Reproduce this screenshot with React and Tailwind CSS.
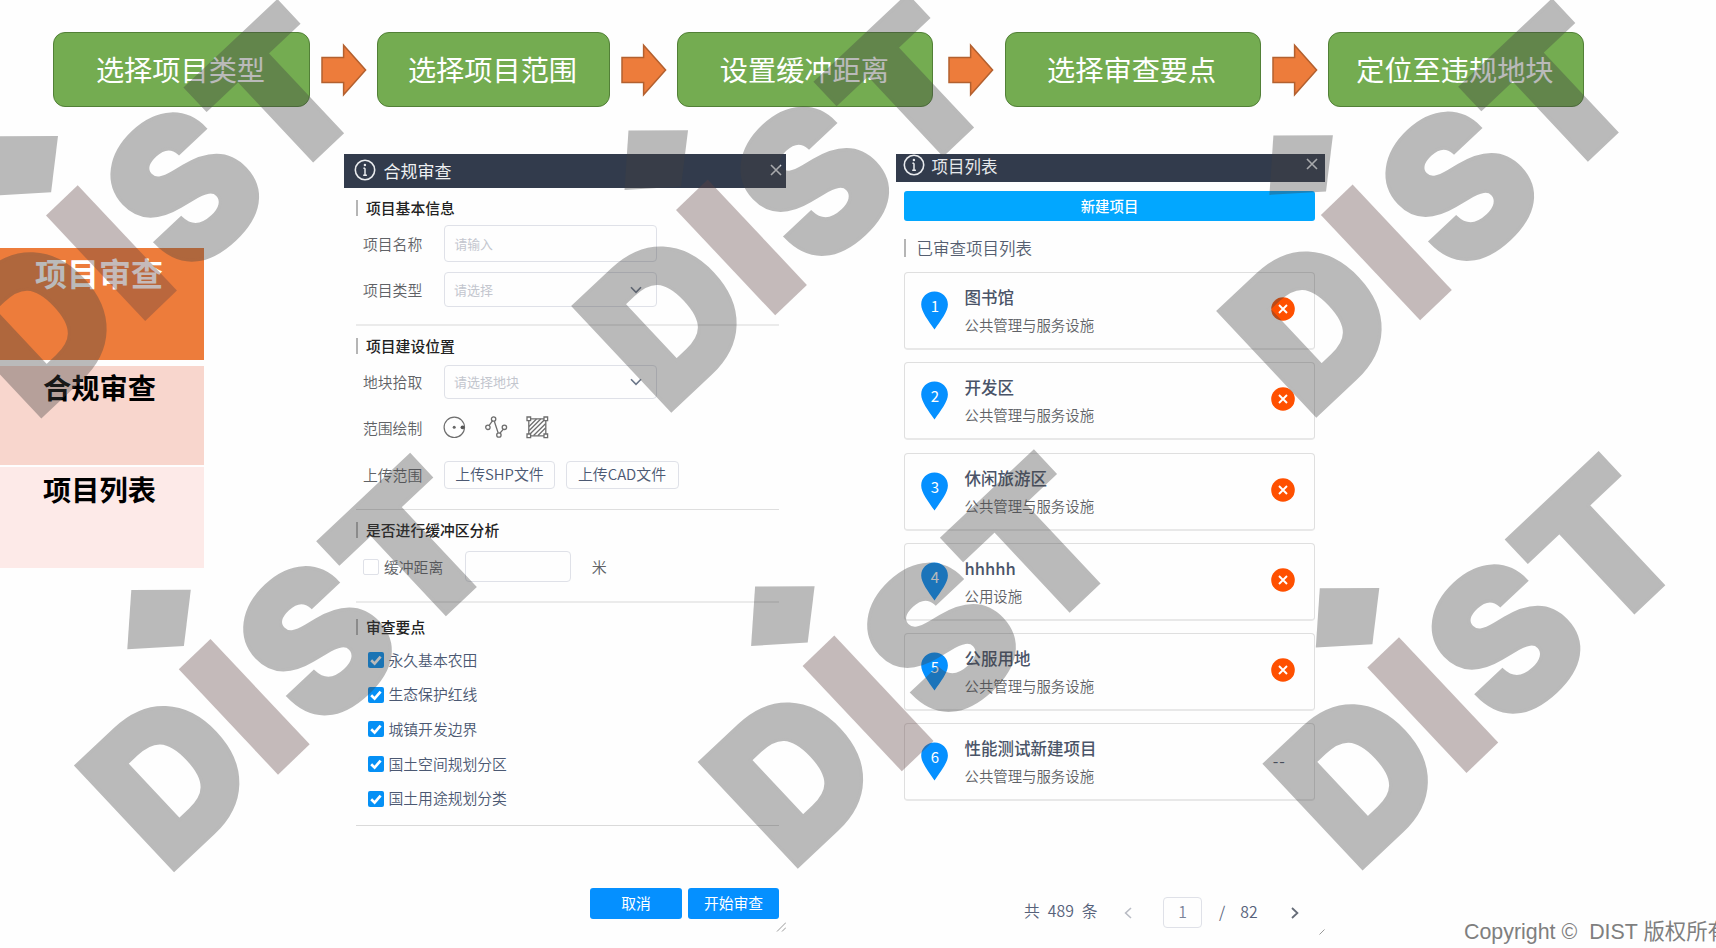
import React from "react";

const STEPS = [
  { label: "选择项目类型", width: "w-[257px]", arrow: "ml-[10.5px] mr-[10.5px]" },
  { label: "选择项目范围", width: "w-[233px]", arrow: "ml-[10.7px] mr-[10.7px]" },
  { label: "设置缓冲距离", width: "w-[256px]", arrow: "ml-[15px] mr-[10.3px]" },
  { label: "选择审查要点", width: "w-[256px]", arrow: "ml-[11px] mr-[10.2px]" },
  { label: "定位至违规地块", width: "w-[256px]" },
];

const POINTS = ["永久基本农田", "生态保护红线", "城镇开发边界", "国土空间规划分区", "国土用途规划分类"];

const PROJECTS = [
  { name: "图书馆", type: "公共管理与服务设施", failed: true },
  { name: "开发区", type: "公共管理与服务设施", failed: true },
  { name: "休闲旅游区", type: "公共管理与服务设施", failed: true },
  { name: "hhhhh", type: "公用设施", failed: true },
  { name: "公服用地", type: "公共管理与服务设施", failed: true },
  { name: "性能测试新建项目", type: "公共管理与服务设施", failed: false },
];

const MARKS = [
  [40.9, 419],
  [670.9, 413.3],
  [1315.8, 418.3],
  [173.7, 872.7],
  [797.5, 869.3],
  [1362.2, 871],
];

function Arrow({ className }) {
  return (
    <svg className={`h-[54px] w-[46px] shrink-0 ${className}`} viewBox="0 0 46 54">
      <path
        d="M1 14.5H22.6V2.2L44.6 27L22.6 51.8V39.5H1Z"
        fill="#ed7c3b"
        stroke="#b3602f"
        strokeWidth="1.5"
      />
    </svg>
  );
}

function InfoIcon() {
  return (
    <svg className="size-[22px] shrink-0" viewBox="0 0 22 22" fill="none" stroke="#e9ebee">
      <circle cx="11" cy="11" r="9.7" strokeWidth="1.6" />
      <path d="M11 9.3V16.2M9.4 9.3H11M9.2 16.2H12.9" strokeWidth="1.5" />
      <circle cx="10.9" cy="6" r="1.2" fill="#e9ebee" stroke="none" />
    </svg>
  );
}

function CloseIcon() {
  return (
    <svg className="size-[12px]" viewBox="0 0 12 12" fill="none" stroke="#e2e4e8" strokeWidth="1.6">
      <path d="M1 1L11 11M11 1L1 11" />
    </svg>
  );
}

function ChevronDown() {
  return (
    <svg className="h-[8px] w-[12px]" viewBox="0 0 12 8" fill="none" stroke="#6b7689" strokeWidth="1.6">
      <path d="M1 1.2L6 6.4L11 1.2" />
    </svg>
  );
}

function Section({ title, className }) {
  return (
    <div className={`flex h-4 items-center ${className}`}>
      <div className="h-4 w-[2px] bg-[#b5b5b5]" />
      <div className="ml-2 text-[14.8px] leading-4 font-medium text-[#222]">{title}</div>
    </div>
  );
}

function Field({ label, height, children }) {
  return (
    <div className={`flex items-center pl-[7px] ${height}`}>
      <div className="w-[81px] text-[14.8px] leading-4 font-[350] text-[#606266]">{label}</div>
      {children}
    </div>
  );
}

function Select({ text }) {
  return (
    <div className="flex h-full w-[213px] items-center justify-between rounded-[4px] border border-[#dfe1e8] pr-[14px] pl-[9px]">
      <span className="text-[13px] leading-4 text-[#c3c6ce]">{text}</span>
      <ChevronDown />
    </div>
  );
}

function CheckBox() {
  return (
    <svg className="size-4" viewBox="0 0 16 16">
      <rect width="16" height="16" rx="2" fill="#0590f5" />
      <path d="M3.2 8.3L6.6 11.6L12.6 4.6" fill="none" stroke="#fff" strokeWidth="2.7" />
    </svg>
  );
}

function ReviewPanel() {
  return (
    <section className="mt-[47px] w-[442px] shrink-0">
      <header className="flex h-[34px] items-center bg-[#323b4c] pr-[4.5px] pl-[10px]">
        <div className="-mt-[2px]">
          <InfoIcon />
        </div>
        <div className="ml-[7.5px] text-[17px] leading-5 text-[#eef0f2]">合规审查</div>
        <div className="-mt-[3px] ml-auto">
          <CloseIcon />
        </div>
      </header>
      <div className="pr-[7px] pl-[12px]">
        <Section title="项目基本信息" className="mt-[12px]" />
        <div className="mt-[9px] flex flex-col gap-[10px]">
          <Field label="项目名称" height="h-[37px]">
            <div className="flex h-full w-[213px] items-center rounded-[4px] border border-[#dfe1e8] pl-[9.5px]">
              <span className="text-[12.8px] leading-4 text-[#c3c6ce]">请输入</span>
            </div>
          </Field>
          <Field label="项目类型" height="h-[35px]">
            <Select text="请选择" />
          </Field>
        </div>
        <div className="mt-[17px] h-[2px] bg-[#ebebeb]" />
        <Section title="项目建设位置" className="mt-[12px]" />
        <div className="mt-[11px]">
          <Field label="地块拾取" height="h-[34px]">
            <Select text="请选择地块" />
          </Field>
        </div>
        <div className="mt-[17px]">
          <Field label="范围绘制" height="h-[23px]">
            <div className="-ml-[0.7px] flex gap-[18.5px]">
              <svg className="size-[23px]" viewBox="0 0 23 23" fill="none" stroke="#6e6e6e">
                <circle cx="11.3" cy="11.3" r="10.2" strokeWidth="1.2" />
                <circle cx="11.2" cy="11.3" r="1.5" fill="#666" stroke="none" />
                <circle cx="19.5" cy="11.3" r="1.9" fill="#555" stroke="none" />
              </svg>
              <svg className="size-[23px]" viewBox="0 0 23 23" fill="none" stroke="#6e6e6e" strokeWidth="1.3">
                <path d="M4 9.6L7.6 4.7M9.3 5.2L13.1 16.7M15.1 17L18.2 13.4" />
                <circle cx="2.9" cy="11.3" r="2.2" />
                <circle cx="8.6" cy="3" r="2.2" />
                <circle cx="13.9" cy="19" r="2.2" />
                <circle cx="19.4" cy="11.3" r="2.2" />
              </svg>
              <svg className="size-[23px]" viewBox="0 0 23 23" fill="none" stroke="#6e6e6e" strokeWidth="1.3">
                <path d="M2.8 4.5V18M19.8 4.5V18M4.5 2.8H18M4.5 19.8H18" />
                <path d="M3 10.5L10.5 3M3 14.7L14.7 3M4 18L18.5 3.8M7.6 19.5L19.5 7.8M12 19.5L19.5 12" />
                <path d="M1 1h3.6v3.6H1zM18 1h3.6v3.6H18zM1 18h3.6v3.6H1zM18 18h3.6v3.6H18z" fill="#fff" />
              </svg>
            </div>
          </Field>
        </div>
        <div className="mt-[21.5px]">
          <Field label="上传范围" height="h-[28px]">
            <div className="flex h-full w-[111px] items-center justify-center rounded-[4px] border border-[#dfe1e8] pb-[1px] text-[14.9px] leading-4 font-[350] whitespace-nowrap text-[#4b5872]">
              上传SHP文件
            </div>
            <div className="ml-[11px] flex h-full w-[113px] items-center justify-center rounded-[4px] border border-[#dfe1e8] pr-[1px] pb-[1px] text-[14.9px] leading-4 font-[350] whitespace-nowrap text-[#4b5872]">
              上传CAD文件
            </div>
          </Field>
        </div>
        <div className="mt-[20.5px] h-px bg-[#dedede]" />
        <Section title="是否进行缓冲区分析" className="mt-[12px]" />
        <div className="mt-[13px] flex h-[31px] items-center pl-[7px]">
          <div className="size-4 rounded-[2px] border border-[#dfe1e8] bg-white" />
          <div className="ml-[5px] text-[14.8px] leading-4 font-[350] text-[#606266]">缓冲距离</div>
          <div className="ml-[22px] h-full w-[106px] rounded-[4px] border border-[#dfe1e8]" />
          <div className="ml-[20.5px] text-[15px] leading-4 font-[350] text-[#606266]">米</div>
        </div>
        <div className="mt-[19px] h-[2px] bg-[#ebebeb]" />
        <Section title="审查要点" className="mt-[16px]" />
        <div className="mt-[8px] pl-[11.5px]">
          {POINTS.map((p) => (
            <div key={p} className="flex h-[34.6px] items-center">
              <CheckBox />
              <span className="-mt-[1px] ml-[5px] text-[14.8px] leading-4 font-[350] text-[#4b5872]">{p}</span>
            </div>
          ))}
        </div>
        <div className="mt-[9px] h-px bg-[#dadada]" />
        <div className="mt-[62px] flex justify-end gap-[6px]">
          <button className="h-[31px] w-[92px] rounded-[3px] bg-[#0590ff] text-[14.8px] leading-4 text-white">取消</button>
          <button className="h-[31px] w-[91px] rounded-[3px] bg-[#0590ff] text-[14.8px] leading-4 text-white">开始审查</button>
        </div>
      </div>
      <svg className="mt-[3px] ml-auto size-[10px]" viewBox="0 0 10 10" fill="none" stroke="#999" strokeWidth="1">
        <path d="M1 9.5L10 .5M6 9.5L10 5.5" />
      </svg>
    </section>
  );
}

function Pin({ n }) {
  return (
    <svg className="h-[39px] w-[28px]" viewBox="0 0 28 39">
      <path d="M13.5 .5C5.9 .5 .2 6.2 .2 13.4C.2 20.5 7 29 13.5 38.5C20 29 26.9 20.5 26.9 13.4C26.9 6.2 21.1 .5 13.5 .5Z" fill="#0590ff" />
      <text x="14" y="20.7" textAnchor="middle" fontSize="15" fill="#fff">
        {n}
      </text>
    </svg>
  );
}

function ListPanel() {
  return (
    <section className="mt-[47px] ml-[110px] w-[429px] shrink-0">
      <header className="flex h-[28px] items-center bg-[#323b4c] pr-[7px] pl-[6.5px]">
        <div className="-mt-[7px]">
          <InfoIcon />
        </div>
        <div className="-mt-[4px] ml-[7px] text-[16.5px] leading-5 text-[#e6e8eb]">项目列表</div>
        <div className="-mt-[8px] ml-auto">
          <CloseIcon />
        </div>
      </header>
      <div className="pr-[10px] pl-[8px]">
        <button className="mt-[9px] block h-[30px] w-full rounded-[3px] bg-[#02a7ff] text-[14.4px] leading-4 font-medium text-white">
          新建项目
        </button>
        <div className="mt-[18px] flex h-[18px] items-center">
          <div className="h-[18px] w-[2px] bg-[#b5b5b5]" />
          <div className="ml-[10.5px] text-[16.5px] leading-[18px] font-[350] text-[#555e70]">已审查项目列表</div>
        </div>
        <div className="mt-[15px] flex flex-col gap-[12.25px]">
          {PROJECTS.map((p, i) => (
            <div
              key={p.name}
              className="flex h-[78px] rounded-[4px] border border-b-2 border-[#dfdfdf] border-b-[#e8e8e8] pr-[19.5px] pl-[16px]"
            >
              <div className="mt-[18px]">
                <Pin n={i + 1} />
              </div>
              <div className="ml-[15.5px]">
                <div className="mt-[14px] text-[16.5px] leading-[20px] font-medium text-[#4a5468]">{p.name}</div>
                <div className="mt-[8px] text-[14.4px] leading-[20px] font-[350] text-[#606266]">{p.type}</div>
              </div>
              {p.failed ? (
                <svg className="mt-[24px] ml-auto size-[24px]" viewBox="0 0 24 24">
                  <circle cx="12" cy="12" r="11.8" fill="#ff5000" />
                  <path d="M8 8L16 16M16 8L8 16" stroke="#fff" strokeWidth="1.9" />
                </svg>
              ) : (
                <div className="mt-[26px] mr-[9px] ml-auto text-[16px] leading-5 tracking-[0.8px] text-[#4a5468]">--</div>
              )}
            </div>
          ))}
        </div>
        <div className="mt-[96px] flex h-[31px] items-center pl-[120px] text-[15.8px] leading-5 font-[350] text-[#56617a]">
          <div className="w-[76px] pb-[3px] whitespace-nowrap [word-spacing:4.5px]">共 489 条</div>
          <svg className="ml-[24px] h-[12px] w-[8px]" viewBox="0 0 8 12" fill="none" stroke="#b9bcc4" strokeWidth="1.6">
            <path d="M7 1L1.6 6L7 11" />
          </svg>
          <div className="ml-[31px] flex h-[31px] w-[39px] items-center justify-center rounded-[4px] border border-[#dfe1e8] pb-[1px] text-[#7a8499]">
            1
          </div>
          <div className="ml-[17px] pb-[1px]">/</div>
          <div className="ml-[15px] pb-[2px]">82</div>
          <svg className="mr-[16px] ml-auto h-[12px] w-[8px]" viewBox="0 0 8 12" fill="none" stroke="#666c78" strokeWidth="1.8">
            <path d="M1 1L6.4 6L1 11" />
          </svg>
        </div>
      </div>
      <svg className="mt-[1px] ml-auto size-[6px]" viewBox="0 0 6 6" stroke="#999">
        <path d="M.5 5.5L5.5 .5" />
      </svg>
    </section>
  );
}

function Watermark() {
  return (
    <svg
      className="pointer-events-none absolute inset-0 h-[948px] w-[1716px]"
      viewBox="0 0 1716 948"
      aria-hidden="true"
    >
      {MARKS.map(([x, y]) => (
        <g key={`${x}-${y}`} transform={`translate(${x} ${y})`} opacity="0.36" fill="#434343">
          <g
            className="font-[Inter]"
            fontWeight="900"
            fontSize="100"
            stroke="#434343"
            strokeWidth="1.6"
            transform="rotate(-43.2)"
          >
            <text transform="matrix(1.935 0 0 1.967 -6.9 -1.6)">D</text>
            <text transform="matrix(1.907 0 0 1.985 198.9 0.2)">S</text>
            <text transform="matrix(1.99 0 0 1.93 326.9 -2.3)">T</text>
          </g>
          <path d="M36.8 -233.7L136 -128.4L104.3 -98L5.1 -203.4Z" fill="#614343" />
          <path d="M-42.4 -282.7L17.1 -283L10.2 -226.7L-46.4 -223.4Z" />
        </g>
      ))}
    </svg>
  );
}

export default function App() {
  return (
    <div className="relative flex h-[948px] w-[1716px] flex-col overflow-hidden bg-[#fefefe] font-['Noto_Sans_CJK_SC','Noto_Sans',sans-serif]">
      <div className="mt-[32px] flex h-[75px] shrink-0 items-center pl-[53px]">
        {STEPS.map((s) => (
          <React.Fragment key={s.label}>
            <div
              className={`flex h-[75px] shrink-0 items-center justify-center rounded-[12px] border-[1.5px] border-[#528037] bg-[#74ac51] pr-[2px] pb-[2px] text-[28.2px] leading-8 text-white ${s.width}`}
            >
              {s.label}
            </div>
            {s.arrow && <Arrow className={s.arrow} />}
          </React.Fragment>
        ))}
      </div>
      <div className="flex grow">
        <nav className="mt-[141px] mr-[140px] w-[204px] shrink-0 text-center font-bold text-black">
          <div className="h-[112px] bg-[#ed7c3b] pt-[8px] pr-[6px] text-[32px] leading-8 text-white">项目审查</div>
          <div className="mt-[6px] h-[99px] bg-[#f8d6cd] pt-[5px] pr-[5px] text-[28.2px] leading-8">合规审查</div>
          <div className="mt-[2px] h-[101px] bg-[#fdeae8] pt-[6px] pr-[5px] text-[28.2px] leading-8">项目列表</div>
        </nav>
        <ReviewPanel />
        <ListPanel />
        <footer className="mb-[4px] ml-[139px] self-end font-['Liberation_Sans','Noto_Sans_CJK_SC',sans-serif] text-[21.4px] leading-6 whitespace-pre text-[#7f7f7f]">
          {"Copyright ©  DIST 版权所有"}
        </footer>
      </div>
      <Watermark />
    </div>
  );
}
